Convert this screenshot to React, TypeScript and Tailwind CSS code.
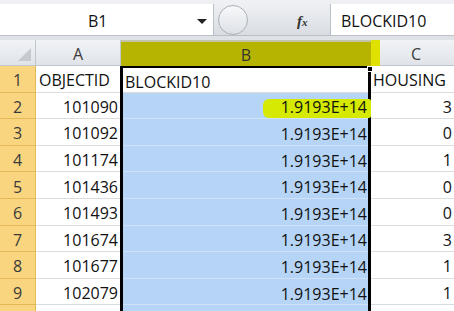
import React from "react";

const rows = [
  { n: "1", a: "OBJECTID", b: "BLOCKID10", c: "HOUSING", header: true },
  { n: "2", a: "101090", b: "1.9193E+14", c: "3" },
  { n: "3", a: "101092", b: "1.9193E+14", c: "0" },
  { n: "4", a: "101174", b: "1.9193E+14", c: "1" },
  { n: "5", a: "101436", b: "1.9193E+14", c: "0" },
  { n: "6", a: "101493", b: "1.9193E+14", c: "0" },
  { n: "7", a: "101674", b: "1.9193E+14", c: "3" },
  { n: "8", a: "101677", b: "1.9193E+14", c: "1" },
  { n: "9", a: "102079", b: "1.9193E+14", c: "1" },
  { n: "", a: "", b: "", c: "" },
];

export default function App() {
  return (
    <div
      className="w-[454px] h-[311px] overflow-hidden bg-white text-[#111]"
      style={{ fontFamily: '"Open Sans", "Noto Sans", sans-serif' }}
    >
      {/* formula bar */}
      <div className="h-[40px] bg-[#dfe3e8] border-t-[4px] border-[#eef0f3] flex items-start">
        <div className="w-[214px] h-[32px] bg-white border-b border-r border-[#b9c0c8] relative">
          <span className="absolute left-[88px] top-[7px] text-[16px] leading-[20px]">B1</span>
          <svg className="absolute left-[197px] top-[15px]" width="10" height="6" viewBox="0 0 10 6">
            <path d="M0 0 L10 0 L5 5 Z" fill="#222" />
          </svg>
        </div>
        <div className="w-[116px] h-[32px] relative bg-gradient-to-b from-[#eef0f3] to-[#d9dde3] border-b border-[#b9c0c8]">
          <div className="absolute left-[4px] top-[1px] w-[30px] h-[30px] rounded-full border border-[#a9b0b8] bg-gradient-to-b from-[#f7f8fa] to-[#dde1e6]" />
          <span
            className="absolute left-[83px] top-[7px] text-[15px] leading-[20px] italic font-bold text-[#333]"
            style={{ fontFamily: '"Liberation Serif", serif' }}
          >
            f<span className="text-[11px]">x</span>
          </span>
        </div>
        <div className="flex-1 h-[32px] bg-white border-l border-b border-[#b9c0c8] flex items-center pl-[10px] pt-[3px] text-[16px]">
          BLOCKID10
        </div>
      </div>

      {/* column header */}
      <div className="flex h-[26px] bg-[#e4e8ed]">
        <div className="w-[36px] h-full border-r border-b border-[#bfc6ce] bg-gradient-to-b from-[#f1f3f6] to-[#e0e4e9] relative">
          <svg className="absolute right-[4px] bottom-[4px]" width="13" height="13" viewBox="0 0 13 13">
            <path d="M13 0 L13 13 L0 13 Z" fill="#c5cad1" />
          </svg>
        </div>
        <div className="w-[85px] h-full border-r border-b border-[#bfc6ce] bg-gradient-to-b from-[#f1f3f6] to-[#e0e4e9] flex items-center justify-center pt-[3px] text-[16px] text-[#3b3b3b]">
          A
        </div>
        <div className="w-[250px] h-full bg-[#b6b400] flex items-center justify-center pt-[2px] text-[16px] text-[#333] border-t-[2px] border-[#c4c4a8]">
          B
        </div>
        <div className="w-[9px] h-full bg-[#dfe200]" />
        <div className="flex-1 h-full border-b border-[#bfc6ce] bg-gradient-to-b from-[#f1f3f6] to-[#e0e4e9] flex items-center justify-center pt-[3px] text-[16px] text-[#3b3b3b] pr-[2px]">
          C
        </div>
      </div>

      {/* rows */}
      <div className="relative">
        {rows.map((r, i) => (
          <div key={i} className="flex h-[26.6px]">
            <div className="w-[36px] h-full bg-[#f9d580] border-r border-b border-[#e3b957] flex items-center justify-center pt-[3px] text-[16px] text-[#3a3a3a]">
              {r.n}
            </div>
            <div
              className={`w-[84px] h-full border-b border-[#dadcdd] flex items-center pt-[3px] text-[16px] ${
                r.header ? "justify-start pl-[3px]" : "justify-end pr-[2px]"
              }`}
            >
              {r.a}
            </div>
            <div
              className={`w-[251px] h-full border-x-[3px] border-black flex items-center pt-[3px] text-[16px] relative ${
                r.header ? "bg-white justify-start pl-[2px] border-t-[2px]" : "bg-[#b6d5f6] justify-end pr-[1px]"
              }`}
            >
              <div
                className={`absolute left-0 right-0 bottom-0 h-px ${r.header ? "bg-[#dadcdd]" : "bg-[#cfe1f7]"}`}
              />
              {r.n === "2" && (
                <div className="absolute right-[-3px] top-[6px] w-[108px] h-[19px] bg-[#d5ea00] rounded-l-[6px] rounded-r-[2px]" />
              )}
              <span className="relative">{r.b}</span>
            </div>
            <div
              className={`flex-1 h-full border-b border-[#dadcdd] flex items-center pt-[3px] text-[16px] ${
                r.header ? "justify-start pl-[2px]" : "justify-end pr-[2px]"
              }`}
            >
              {r.c}
            </div>
          </div>
        ))}
        <div className="absolute left-[367px] top-[0px] w-[6px] h-[6px] bg-black border border-white" />
      </div>
    </div>
  );
}
